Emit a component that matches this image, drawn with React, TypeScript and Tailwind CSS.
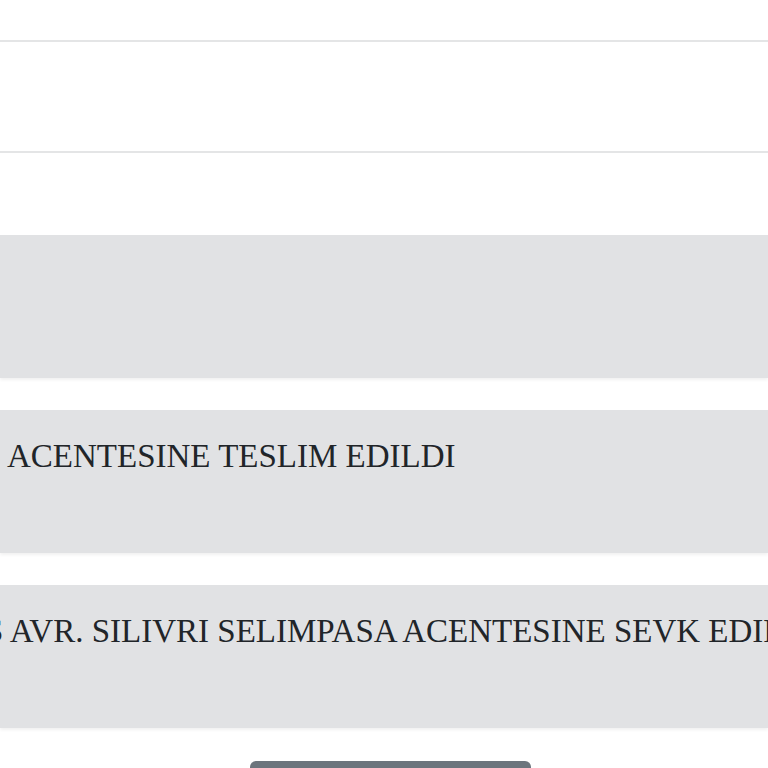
import React from "react";

const serif = { fontFamily: '"Liberation Serif", "Times New Roman", serif' };

const Row: React.FC<{ text?: string; offset?: string }> = ({ text, offset }) => (
  <div className="h-[143px] w-full overflow-hidden bg-[#e1e2e4] shadow-[0_2px_3px_rgba(0,0,0,0.06)]">
    {text && (
      <div
        className={`whitespace-nowrap pt-[22px] text-[33px] leading-[1.5] text-[#212529] ${offset ?? ""}`}
        style={serif}
      >
        {text}
      </div>
    )}
  </div>
);

export default function App() {
  return (
    <div className="h-[768px] w-[768px] overflow-hidden bg-white" style={serif}>
      <div className="h-[40px]" />
      <div className="h-[2px] bg-[#e4e5e6]" />
      <div className="h-[109px]" />
      <div className="h-[2px] bg-[#e4e5e6]" />
      <div className="h-[82px]" />

      <div className="flex flex-col gap-[32px]">
        <Row />
        <Row text="ACENTESINE TESLIM EDILDI" offset="ml-[7px]" />
        <Row text="S AVR. SILIVRI SELIMPASA ACENTESINE SEVK EDILDI" offset="-ml-[15px]" />
      </div>

      <div className="flex justify-start pl-[250px] pt-[33px]">
        <button className="h-[40px] w-[281px] rounded-[6px] bg-[#6c757d]" />
      </div>
    </div>
  );
}
